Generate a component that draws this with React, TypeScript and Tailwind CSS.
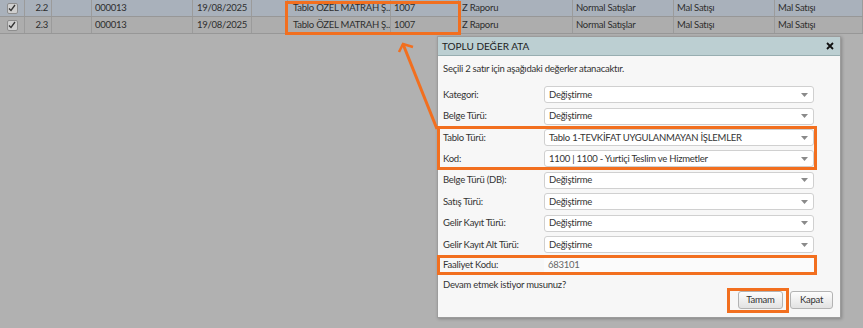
const cols = [25, 27, 40, 101, 59, 36, 103, 68, 114, 101, 101, 88];

const rows = [
  ["", "2.2", "", "000013", "19/08/2025", "", "Tablo ÖZEL MATRAH Ş...", "1007", "Z Raporu", "Normal Satışlar", "Mal Satışı", "Mal Satışı"],
  ["", "2.3", "", "000013", "19/08/2025", "", "Tablo ÖZEL MATRAH Ş...", "1007", "Z Raporu", "Normal Satışlar", "Mal Satışı", "Mal Satışı"],
];

const CheckBox = () => (
  <div className="w-[11px] h-[11px] border border-[#8d8d8d] rounded-[2px] bg-[#cfcfcf] flex items-center justify-center">
    <svg width="8" height="8" viewBox="0 0 8 8">
      <path d="M1 4.5 L3 6.5 L7 1" fill="none" stroke="#333" strokeWidth="1.3" />
    </svg>
  </div>
);

const Select = ({ value }: { value: string }) => (
  <div className="w-[270px] h-[17px] bg-white border border-[#d0d0d0] rounded-[3px] flex items-center justify-between pl-[4px] pr-[5px]">
    <span className="text-[#333]">{value}</span>
    <svg width="7" height="4" viewBox="0 0 7 4">
      <path d="M0 0 L7 0 L3.5 4 Z" fill="#8a8a8a" />
    </svg>
  </div>
);

const Row = ({ label, value }: { label: string; value: string }) => (
  <div className="flex items-center">
    <div className="w-[101px] text-[#333]">{label}</div>
    <Select value={value} />
  </div>
);

export default function App() {
  return (
    <div
      className="relative w-[863px] h-[328px] bg-[#b1b1b1] overflow-hidden text-[9.5px] tracking-[-0.25px] leading-[14px] text-[#2e2e2e]"
      style={{ fontFamily: "Lato, 'Noto Sans', sans-serif" }}
    >
      {/* table */}
      <div className="flex flex-col">
        {rows.map((r, i) => (
          <div
            key={i}
            className={`flex h-[17px] border-b border-[#979797] ${i === 0 ? "bg-[#a9b1bb]" : "bg-[#adadad]"}`}
          >
            {r.map((c, j) => (
              <div
                key={j}
                style={{ width: cols[j] }}
                className={`shrink-0 h-full flex items-center border-r border-[#9b9b9b] whitespace-nowrap overflow-hidden ${
                  j === 0 ? "justify-center" : j === 1 ? "justify-end pr-[3px]" : j === 4 ? "justify-center" : j === 6 ? "pl-[5px]" : "pl-[3px]"
                }`}
              >
                {j === 0 ? <CheckBox /> : c}
              </div>
            ))}
          </div>
        ))}
      </div>

      {/* dialog */}
      <div className="absolute left-[437px] top-[36px] w-[404px] h-[282px] bg-[#f7f7f7] border border-[#9c9c9c] shadow-[1px_1px_3px_rgba(0,0,0,0.25)] flex flex-col">
        <div className="h-[19px] bg-[#bccfd2] border-b border-[#98aeb1] flex items-center justify-between pl-[4px] pr-[6px]">
          <span className="text-[10px] tracking-normal text-[#222]">TOPLU DEĞER ATA</span>
          <svg width="8" height="8" viewBox="0 0 8 8">
            <path d="M1 1 L7 7 M7 1 L1 7" stroke="#111" strokeWidth="1.8" />
          </svg>
        </div>
        <div className="flex flex-col pl-[5px] pr-[26px] pt-[6px]">
          <div className="text-[#333]">Seçili 2 satır için aşağıdaki değerler atanacaktır.</div>
          <div className="flex flex-col gap-[4.5px] mt-[10px]">
            <Row label="Kategori:" value="Değiştirme" />
            <Row label="Belge Türü:" value="Değiştirme" />
            <div className="flex flex-col gap-[4px] -my-[3px] -ml-[6px] -mr-[3px] pl-[3px] border-[3px] border-[#f26f1f]">
              <Row label="Tablo Türü:" value="Tablo 1-TEVKİFAT UYGULANMAYAN İŞLEMLER" />
              <Row label="Kod:" value="1100 | 1100 - Yurtiçi Teslim ve Hizmetler" />
            </div>
            <Row label="Belge Türü (DB):" value="Değiştirme" />
            <Row label="Satış Türü:" value="Değiştirme" />
            <Row label="Gelir Kayıt Türü:" value="Değiştirme" />
            <Row label="Gelir Kayıt Alt Türü:" value="Değiştirme" />
            <div className="flex items-center -my-[3px] -ml-[6px] -mr-[3px] pl-[3px] border-[3px] border-[#f26f1f]">
              <div className="w-[101px] text-[#333]">Faaliyet Kodu:</div>
              <div className="w-[270px] h-[14px] bg-[#fbfbfb] flex items-center pl-[4px] text-[#666]">683101</div>
            </div>
          </div>
          <div className="mt-[7px] leading-[12px] text-[#333]">Devam etmek istiyor musunuz?</div>
          <div className="flex justify-end items-center -mt-[3px] -mr-[19px]">
            <div className="border-[3px] border-[#f26f1f] pl-[8px] pr-[3px] pb-[1px]">
              <button className="w-[45px] h-[18px] rounded-[3px] border border-[#b3b3b3] bg-gradient-to-b from-[#fdfdfd] to-[#e2e2e2] text-[#333]">
                Tamam
              </button>
            </div>
            <button className="ml-[1px] w-[43px] h-[18px] rounded-[3px] border border-[#b3b3b3] bg-gradient-to-b from-[#fdfdfd] to-[#e2e2e2] text-[#333]">
              Kapat
            </button>
          </div>
        </div>
      </div>

      {/* annotations */}
      <div className="absolute left-[285px] top-[1px] w-[176px] h-[34px] border-[3px] border-[#f26f1f] pointer-events-none" />
      <svg className="absolute left-0 top-0 pointer-events-none" width="863" height="328">
        <path d="M437 129 L403 44" stroke="#f26f1f" strokeWidth="3" fill="none" />
        <path d="M399 52 L403 44 L413 47" stroke="#f26f1f" strokeWidth="2.5" fill="none" />
      </svg>
    </div>
  );
}
